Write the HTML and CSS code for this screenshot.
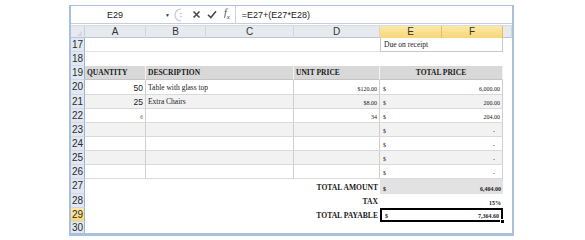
FILE: index.html
```html
<!DOCTYPE html>
<html lang="en">
<head>
    <meta charset="UTF-8">
    <meta name="viewport" content="width=device-width, initial-scale=1.0">
    <title>Invoice sheet</title>
    <link rel="stylesheet" href="styles.css">
</head>
<body>
    <div class="window">
        <div class="formula-bar">
            <div class="name-box">E29</div>
            <span class="drop">&#9660;</span>
            <svg class="grip" width="12" height="14" viewBox="0 0 12 14">
                <path d="M7 1 A6 6 0 0 0 7 13" fill="none" stroke="#c4ccd6" stroke-width="1.2"/>
                <circle cx="7" cy="5.5" r="0.8" fill="#b0b8c4"/>
                <circle cx="7" cy="8.5" r="0.8" fill="#b0b8c4"/>
            </svg>
            <svg class="btn" width="9" height="9" viewBox="0 0 9 9">
                <path d="M1.5 1.5 L7.5 7.5 M7.5 1.5 L1.5 7.5" stroke="#4a4a4a" stroke-width="1.6"/>
            </svg>
            <svg class="btn" width="10" height="9" viewBox="0 0 10 9">
                <path d="M1 4.8 L3.8 7.6 L9 1.2" fill="none" stroke="#4a4a4a" stroke-width="1.6"/>
            </svg>
            <span class="fx">f<sub>x</sub></span>
            <div class="formula">=E27+(E27*E28)</div>
        </div>

        <div class="sheet">
            <div class="row col-head">
                <div class="corner"><span class="tri"></span></div>
                <div class="ch">A</div>
                <div class="ch">B</div>
                <div class="ch">C</div>
                <div class="ch">D</div>
                <div class="ch sel">E</div>
                <div class="ch sel">F</div>
                <div class="ch"></div>
            </div>

            <div class="row">
                <div class="rh">17</div>
                <div class="c span4 line"></div>
                <div class="c span2 due">Due on receipt</div>
                <div class="c"></div>
            </div>
            <div class="row">
                <div class="rh">18</div>
                <div class="c span7"></div>
            </div>
            <div class="row head">
                <div class="rh">19</div>
                <div class="c t">QUANTITY</div>
                <div class="c t span2">DESCRIPTION</div>
                <div class="c t">UNIT PRICE</div>
                <div class="c t span2 center">TOTAL PRICE</div>
                <div class="c blank"></div>
            </div>
            <div class="row">
                <div class="rh">20</div>
                <div class="c t qty">50</div>
                <div class="c t span2">Table with glass top</div>
                <div class="c t num">$120.00</div>
                <div class="c t span2 money"><span>$</span><span>6,000.00</span></div>
                <div class="c blank"></div>
            </div>
            <div class="row alt">
                <div class="rh">21</div>
                <div class="c t qty">25</div>
                <div class="c t span2">Extra Chairs</div>
                <div class="c t num">$8.00</div>
                <div class="c t span2 money"><span>$</span><span>200.00</span></div>
                <div class="c blank"></div>
            </div>
            <div class="row">
                <div class="rh">22</div>
                <div class="c t num small">6</div>
                <div class="c t span2"></div>
                <div class="c t num">34</div>
                <div class="c t span2 money"><span>$</span><span>204.00</span></div>
                <div class="c blank"></div>
            </div>
            <div class="row alt">
                <div class="rh">23</div>
                <div class="c t"></div>
                <div class="c t span2"></div>
                <div class="c t"></div>
                <div class="c t span2 money"><span>$</span><span class="dash">-</span></div>
                <div class="c blank"></div>
            </div>
            <div class="row">
                <div class="rh">24</div>
                <div class="c t"></div>
                <div class="c t span2"></div>
                <div class="c t"></div>
                <div class="c t span2 money"><span>$</span><span class="dash">-</span></div>
                <div class="c blank"></div>
            </div>
            <div class="row alt">
                <div class="rh">25</div>
                <div class="c t"></div>
                <div class="c t span2"></div>
                <div class="c t"></div>
                <div class="c t span2 money"><span>$</span><span class="dash">-</span></div>
                <div class="c blank"></div>
            </div>
            <div class="row">
                <div class="rh">26</div>
                <div class="c t"></div>
                <div class="c t span2"></div>
                <div class="c t"></div>
                <div class="c t span2 money"><span>$</span><span class="dash">-</span></div>
                <div class="c blank"></div>
            </div>
            <div class="row">
                <div class="rh">27</div>
                <div class="c span3"></div>
                <div class="c label">TOTAL AMOUNT</div>
                <div class="c span2 money bold total"><span>$</span><span>6,404.00</span></div>
                <div class="c"></div>
            </div>
            <div class="row">
                <div class="rh">28</div>
                <div class="c span3"></div>
                <div class="c label">TAX</div>
                <div class="c"></div>
                <div class="c num bold">15%</div>
                <div class="c"></div>
            </div>
            <div class="row">
                <div class="rh sel">29</div>
                <div class="c span3"></div>
                <div class="c label">TOTAL PAYABLE</div>
                <div class="c span2 money bold active"><span>$</span><span>7,364.60</span><i class="handle"></i></div>
                <div class="c"></div>
            </div>
            <div class="row last">
                <div class="rh">30</div>
                <div class="c span7"></div>
            </div>
        </div>
    </div>
</body>
</html>
```

FILE: styles.css
```css
:root {
    --frame: #a9c0dc;
    --head-bg: #e6e9ee;
    --row-head: #e1e8f1;
    --grid: #cfcfcf;
    --fill-head: #d8d8d8;
    --fill-alt: #f2f2f2;
    --select: #f8d676;
}

* {
    margin: 0;
    padding: 0;
    box-sizing: border-box;
}

body {
    background: #fff;
    width: 585px;
    height: 240px;
    overflow: hidden;
}

.window {
    margin: 5px 0 0 69px;
    width: 445px;
    border: 2px solid var(--frame);
    border-top-width: 1px;
    border-bottom-width: 3px;
    background: #fff;
}

/* formula bar */
.formula-bar {
    height: 18px;
    display: flex;
    align-items: center;
    border-bottom: 1px solid #c3cfdd;
    font-family: "Liberation Sans", Arial, sans-serif;
    font-size: 9px;
    color: #222;
}

.name-box {
    width: 88px;
    text-align: center;
}

.drop {
    font-size: 5px;
    color: #333;
    margin-left: 6px;
}

.grip {
    margin-left: 4px;
}

.btn {
    margin-left: 6px;
}

.fx {
    font-family: "Liberation Serif", serif;
    font-style: italic;
    font-size: 10px;
    color: #444;
    margin-left: 7px;
    padding-right: 5px;
    border-right: 1px solid #c9d2de;
    line-height: 14px;
}

.fx sub {
    font-size: 7px;
}

.formula {
    padding-left: 6px;
}

/* sheet */
.sheet {
    display: flex;
    flex-direction: column;
    padding-top: 1px;
    background: #fff;
}

.row {
    display: grid;
    grid-template-columns: 14px 61px 60px 88px 86px 62px 61px 1fr;
    height: 14.15px;
    font-family: "Liberation Sans", serif;
    font-family: "Liberation Serif", serif;
    font-size: 7.5px;
    color: #1b1b1b;
}

.row.last {
    height: 11px;
}

.col-head {
    height: 13px;
    background: var(--head-bg);
    border-top: 1px solid #d6dce4;
    border-bottom: 1px solid #b9c6d6;
    font-family: "Liberation Sans", Arial, sans-serif;
    font-size: 10px;
    color: #333;
}

.corner {
    position: relative;
    border-right: 1px solid #c7d0dc;
}

.tri {
    position: absolute;
    right: 2px;
    bottom: 2px;
    border-left: 5px solid transparent;
    border-bottom: 5px solid #cfd6df;
}

.ch {
    text-align: center;
    line-height: 12px;
    border-right: 1px solid #d0d6de;
}

.ch.sel {
    background: linear-gradient(#fce9a8, var(--select));
    border-right-color: #e2c06a;
}

.rh {
    background: var(--row-head);
    border-right: 1px solid #9fb5cf;
    border-bottom: 1px solid #cfd8e4;
    font-family: "Liberation Sans", Arial, sans-serif;
    font-size: 10px;
    line-height: 13px;
    color: #2b2b2b;
    padding-left: 1px;
}

.last .rh {
    line-height: 11px;
    border-bottom: none;
}

.rh.sel {
    background: linear-gradient(#fce9a8, var(--select));
}

.c {
    display: flex;
    align-items: flex-end;
    padding: 0 2px 2px;
    white-space: nowrap;
}

.span2 { grid-column: span 2; }
.span3 { grid-column: span 3; }
.span4 { grid-column: span 4; }
.span7 { grid-column: span 7; }

.line {
    border-bottom: 1px solid #e3e3e3;
}

.due {
    border: 1px solid #c9c9c9;
    border-top: none;
    padding-left: 3px;
}

.t {
    border-right: 1px solid var(--grid);
    border-bottom: 1px solid #dadada;
}

.head .t {
    background: var(--fill-head);
    font-weight: bold;
    border-right-color: #f4f4f4;
    border-bottom-color: #c4c4c4;
}

.alt .t {
    background: var(--fill-alt);
}

.center {
    justify-content: center;
}

.qty {
    justify-content: flex-end;
    font-family: "Liberation Sans", Arial, sans-serif;
    font-size: 8.5px;
    padding-bottom: 1px;
}

.num {
    justify-content: flex-end;
    font-size: 6px;
}

.small {
    font-size: 5.5px;
    color: #7a5a2a;
}

.money {
    justify-content: space-between;
    font-size: 6px;
    padding-left: 3px;
}

.dash {
    padding-right: 5px;
}

.bold {
    font-weight: bold;
}

.label {
    justify-content: flex-end;
    font-weight: bold;
    font-size: 7.6px;
}

.total {
    background: #e2e2e2;
}

.active {
    position: relative;
    border: 2px solid #000;
    padding-bottom: 1px;
}

.handle {
    position: absolute;
    right: -4px;
    bottom: -4px;
    width: 5px;
    height: 5px;
    background: #000;
    border: 1px solid #fff;
}
```
